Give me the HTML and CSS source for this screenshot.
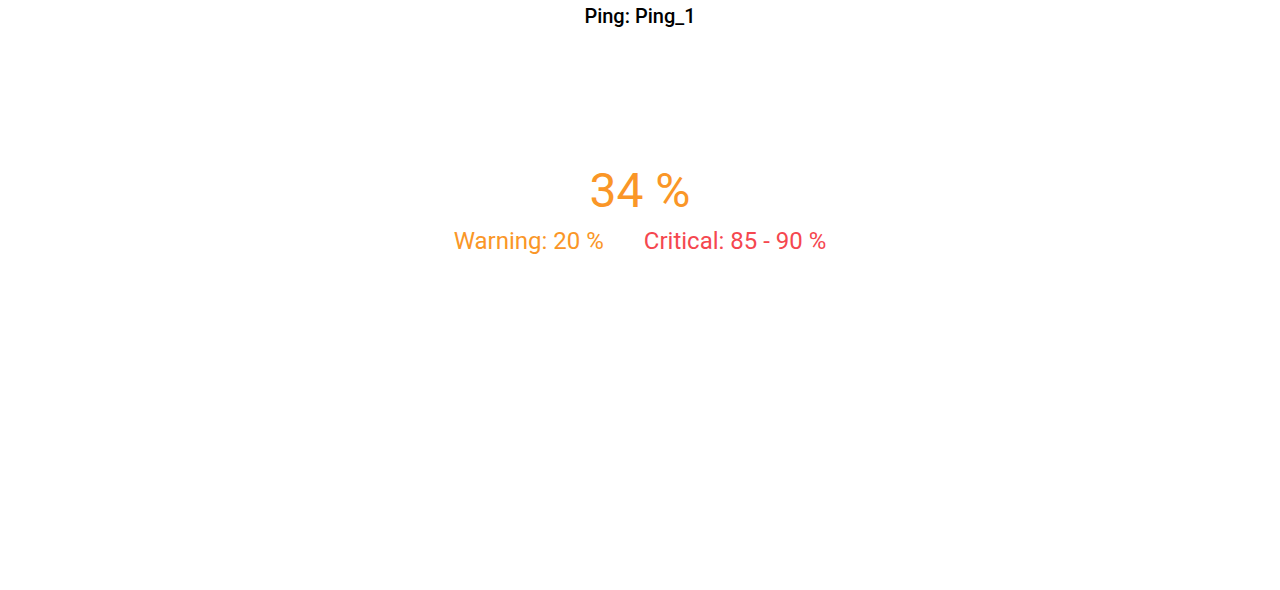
FILE: index.html
```html
<!DOCTYPE html>
<html>
<head>
<meta charset="utf-8">
<link rel="stylesheet" href="styles.css">
</head>
<body>
<div class="panel">
  <div class="title">Ping: Ping_1</div>
  <div class="content">
    <div class="value">34 %</div>
    <div class="thresholds">
      <span class="warn">Warning: 20 %</span>
      <span class="crit">Critical: 85 - 90 %</span>
    </div>
  </div>
</div>
</body>
</html>
```

FILE: styles.css
```css
html, body {
  margin: 0;
  padding: 0;
  background: #ffffff;
  font-family: Roboto, "Liberation Sans", sans-serif;
}
.panel {
  width: 1280px;
  height: 590px;
  display: flex;
  flex-direction: column;
  align-items: center;
}
.title {
  font-size: 20px;
  font-weight: 500;
  color: #000;
  line-height: 22px;
  margin-top: 5px;
}
.content {
  display: flex;
  flex-direction: column;
  align-items: center;
  margin-top: 136px;
}
.value {
  font-size: 48px;
  line-height: 56px;
  color: #fa9627;
}
.thresholds {
  display: flex;
  gap: 40px;
  font-size: 24px;
  line-height: 28px;
  margin-top: 8px;
}
.warn { color: #fa9627; }
.crit { color: #f5474f; }
```
